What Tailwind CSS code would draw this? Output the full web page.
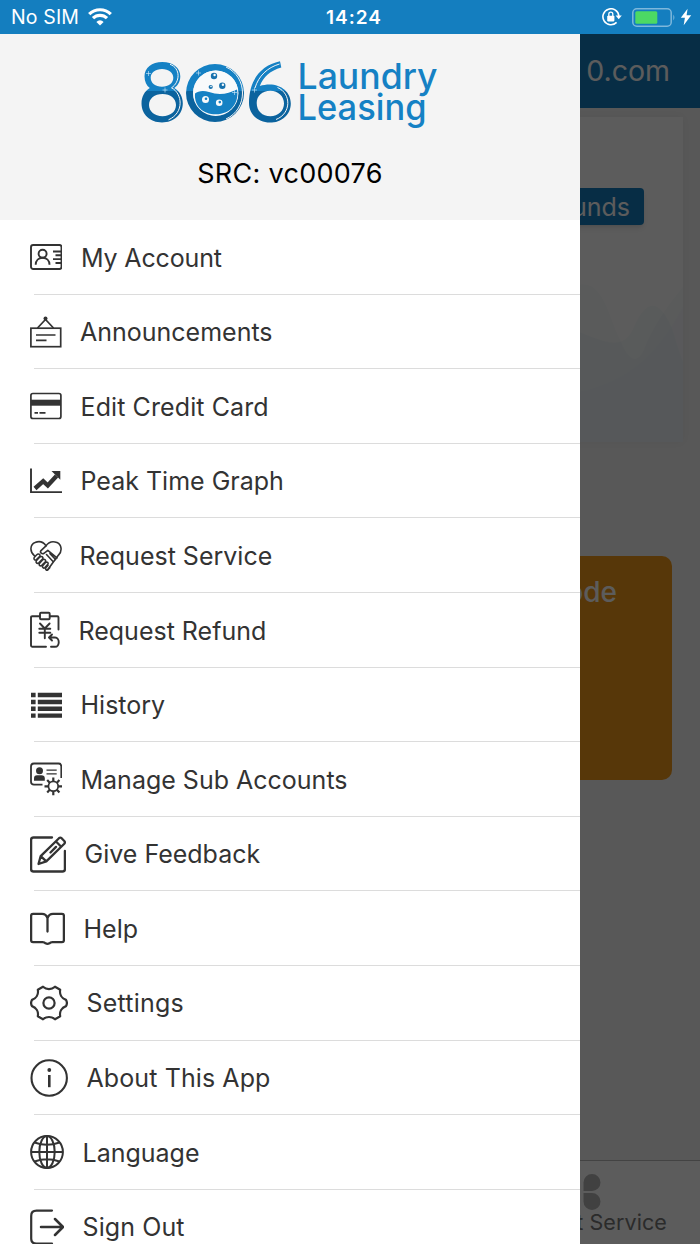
<!DOCTYPE html>
<html lang="en">
<head>
<meta charset="utf-8">
<title>806 Laundry Leasing</title>
<script src="https://cdn.jsdelivr.net/npm/@tailwindcss/browser@4"></script>
</head>
<body class="font-['Inter',sans-serif]">
<div class="relative flex h-[1244px] w-[700px] flex-col overflow-hidden bg-[#f4f4f4]">

  <!-- Status bar -->
  <div class="relative z-20 grid h-[34px] shrink-0 grid-cols-3 items-center bg-[#147ebf] pr-2 pl-[11px] text-white">
    <div class="flex items-center gap-[9px]">
      <span class="pt-px text-[19.5px] leading-none tracking-[0.15px]">No SIM</span>
      <svg class="h-[18px] w-6" viewBox="0 0 24 18" fill="none" stroke="#fff" stroke-width="3.2"><path d="M1.2 6.2a15.3 15.3 0 0 1 21.6 0"/><path d="M5 10.2a9.9 9.9 0 0 1 14 0"/><path d="M12 17.6l-3.6-3.7a5 5 0 0 1 7.200 0z" fill="#fff" stroke="none"/></svg>
    </div>
    <div class="pt-px pl-[5px] text-center text-[19px] leading-none font-semibold tracking-[1px]">14:24</div>
    <div class="flex items-center justify-end gap-2.5">
      <svg class="h-[18px] w-5" viewBox="0 0 20 18" fill="none" stroke="#fff" stroke-width="1.6"><path d="M16.9 8.2A8 8 0 1 0 14.6 14.4"/><path d="M13.600 7.400h6.200l-3.100 3.800z" fill="#fff" stroke="none"/><rect x="5.200" y="7.800" width="7.200" height="5.600" rx=".8" fill="#fff" stroke="none"/><path d="M6.800 8V6.200a2 2 0 0 1 4 0V8" stroke-width="1.300"/></svg>
      <svg class="h-[19px] w-[44px]" viewBox="0 0 44 19"><rect x=".8" y=".8" width="38.400" height="17.400" rx="4" fill="none" stroke="#fff" stroke-opacity=".45" stroke-width="1.500"/><rect x="3.300" y="3.300" width="22" height="12.400" rx="1.500" fill="#4cd964"/><path d="M41.300 6.500q2.200 3 0 6z" fill="#fff" fill-opacity=".45"/></svg>
      <svg class="-ml-1.5 h-[18px] w-3" viewBox="0 0 12 18" fill="#fff"><path d="M7.600.8L.8 9.800h4.100L3.700 17.200 11.200 7.300H6.600z"/></svg>
    </div>
  </div>

  <!-- Page behind the drawer -->
  <div class="flex h-[74px] shrink-0 items-center justify-end bg-[#147ebf] pr-[30px] text-[28.5px] text-white">0.com</div>
  <div class="relative mt-[9px] mr-[17px] ml-4 flex h-[325px] shrink-0 justify-end overflow-hidden bg-white pt-[71px] pr-[39px] shadow-[0_0_10px_rgba(0,0,0,.06)]">
    <svg class="absolute right-0 bottom-0 h-[200px] w-[104px]" viewBox="0 0 104 200"><path d="M0 43C25 38 30 78 42 100C50 120 60 125 68 100C80 75 92 60 104 45V200H0z" fill="#cfe6ec" fill-opacity=".14"/><path d="M0 90C25 100 45 110 55 85C68 55 80 60 90 80C95 90 98 105 104 120V200H0z" fill="#bfe0ea" fill-opacity=".12"/><path d="M0 150C50 140 80 110 104 65V200H0z" fill="#e0e2fa" fill-opacity=".14"/></svg>
    <div class="relative flex h-[37px] items-center rounded bg-[#147ebf] px-[14px] pt-0.5 text-[25px] text-white shadow-md">Add Funds</div>
  </div>
  <div class="mt-[114px] mr-7 ml-7 flex h-[224px] shrink-0 justify-end rounded-[10px] bg-[#f2991a] pt-[15px] pr-[55px] text-[28px] font-medium text-white">Scan Code</div>
  <div class="mt-auto flex h-[84px] shrink-0 flex-col items-end border-t border-[#bbb] bg-white pt-[13px] pr-[33px] text-[#777]">
    <svg class="mr-[66px] h-9 w-9" viewBox="0 0 36 36" fill="#b5b5b5"><path d="M18.500 17V8.500A8.500 8.500 0 1 1 27 17zM18.500 19H27a8.500 8.500 0 1 1-8.500 8.500zM14.500 17V8.500A8.500 8.500 0 1 0 6 17zM14.500 19H6a8.500 8.500 0 1 0 8.500 8.500z"/></svg>
    <span class="text-[21.500px] leading-[24px] tracking-[0.1px]">Request Service</span>
  </div>
  <div class="absolute inset-0 z-10 bg-black/64"></div>

  <!-- Drawer -->
  <aside class="absolute top-[34px] left-0 z-10 flex h-[1210px] w-[580px] flex-col overflow-hidden bg-white">
    <header class="flex h-[186px] shrink-0 flex-col items-center bg-[#f4f4f4] pt-[24px]">
      <svg class="h-[72px] w-[300px] overflow-visible" viewBox="140 58 300 72">
        <defs>
          <linearGradient id="tone" gradientUnits="userSpaceOnUse" x1="0" y1="62" x2="0" y2="123"><stop offset=".47" stop-color="#1581c4"/><stop offset=".47" stop-color="#0b639e"/></linearGradient>
        </defs>
        <g fill="url(#tone)" fill-rule="evenodd">
          <path d="M162.300 62c10.500 0 18 6 18 14.200 0 5.500-2.600 9.300-6 11.800 5 3 8.500 8.300 8.500 15.300 0 11.200-9 19.200-20.800 19.200s-20.500-8-20.500-19.200c0-7 3.300-12.300 8.300-15.300-3.300-2.500-5.300-6.300-5.300-11.800 0-8.200 7.300-14.200 17.800-14.200zM162 69c-6.600 0-11.300 3.500-11.300 8.700s4.700 9 11.300 9 11.300-3.800 11.300-9-4.700-8.700-11.300-8.700zM162.500 94c-8 0-13.500 4.600-13.500 11s5.500 11.200 13.500 11.200 13.500-4.700 13.500-11.200-5.500-11-13.500-11z"/>
          <path d="M215 64a29 29 0 1 1 0 58 29 29 0 0 1 0-58zM215.700 70.500a22.700 22.700 0 1 0 0 45.400 22.700 22.700 0 0 0 0-45.400z"/>
          <path d="M280 61.300l1.300 6.200c-11 3-18 9.500-21.500 18.600 3-1 6.500-1.500 9.700-1.500 12 0 21.300 8 21.300 18.800 0 11.200-9.300 19.200-21 19.200S249 114.500 249 103c0-22 11-37.500 31-41.700zM270.300 90.700c-8 0-13.600 5-13.600 12.300 0 8 5.600 13.200 13.600 13.200s13.700-5.500 13.700-12.700-5.700-12.800-13.700-12.800z"/>
        </g>
        <path d="M170 64.300c11 4 10 18 1.500 23.500 11 5.500 13 25-3 32M226 67c22 10 22 42 0 52M277.500 87.500c14 6 14 26-1.500 32M279.500 64c-12 3.500-21 12-24.500 24" fill="none" stroke="#f4f4f4" stroke-width="1"/>
        <circle cx="215.700" cy="93" r="22.500" fill="#f8fafb"/>
        <path d="M195 93.500c3-2.500 8-3.500 14-1.500 10 3.500 19 2 28-2.500 2.500 13-6 24.800-21.200 24.800C203 114.300 194 106 195 93.500z" fill="#1581c4"/>
        <g fill="#1772ae"><circle cx="214" cy="76" r="3.200"/><circle cx="222.300" cy="85.700" r="3.200"/><circle cx="210.700" cy="87" r="2.100"/></g>
        <g fill="#f8fafb"><circle cx="205.500" cy="99.500" r="3.500"/><circle cx="219.200" cy="102.800" r="3.300"/><circle cx="214.600" cy="75" r="1.200"/><circle cx="222.900" cy="84.800" r="1.200"/><circle cx="211" cy="86.500" r=".8"/></g>
        <circle cx="206" cy="98.800" r="1.300" fill="#1581c4"/><circle cx="219.800" cy="102.100" r="1.300" fill="#1581c4"/>
        <g stroke="#d9edfa" stroke-width=".6"><path d="M148.500 71v5M146 73.500h5M165 87.500v5M162.500 90h5M198.500 70.500v5M196 73h5M234.500 90v5M232 92.500h5M254.500 87.500v5M252 90h5"/></g>
        <g fill="#1581c4" font-family="Inter, sans-serif" font-size="35.500" font-weight="500"><text x="297.500" y="88.700" textLength="140" lengthAdjust="spacingAndGlyphs">Laundry</text><text x="297.500" y="119.700" textLength="129" lengthAdjust="spacingAndGlyphs">Leasing</text></g>
      </svg>
      <div class="mt-[26px] text-[27px] leading-[36px] tracking-[0.3px] text-black">SRC: vc00076</div>
    </header>

    <nav class="flex flex-col text-[25px] text-[#333]">
      <a class="relative flex h-[74.600px] shrink-0 items-center pl-[30px] after:absolute after:right-0 after:bottom-0 after:left-[34px] after:h-px after:bg-[#dcdcdc]"><svg class="mr-[19px] h-10 w-8" viewBox="0 0 32 40" fill="none" stroke="#333" stroke-width="1.900"><rect x="1" y="8" width="30.500" height="24" rx="2.200"/><circle cx="12.600" cy="16.700" r="4"/><path d="M5.700 27.800c0-4.500 3-7 6.900-7s6.900 2.500 6.900 7M23 14.500h8M25.500 18.300h6M23 22.100h8M25.500 26h6"/></svg><span class="pt-0.5 tracking-[-0.15px]">My Account</span></a>
      <a class="relative flex h-[74.600px] shrink-0 items-center pl-[30px] after:absolute after:right-0 after:bottom-0 after:left-[34px] after:h-px after:bg-[#dcdcdc]"><svg class="mr-[18px] h-10 w-8" viewBox="0 0 32 40" fill="none" stroke="#333" stroke-width="1.700"><rect x=".9" y="16.200" width="29.800" height="18.500"/><path d="M7.500 16l8-8.500 8 8.500M6 23h19.500M6 28.300h10.500"/><circle cx="15.500" cy="6.500" r="2" fill="#333" stroke="none"/></svg><span class="pt-0.5">Announcements</span></a>
      <a class="relative flex h-[74.600px] shrink-0 items-center pl-[30px] after:absolute after:right-0 after:bottom-0 after:left-[34px] after:h-px after:bg-[#dcdcdc]"><svg class="mr-[18.500px] h-10 w-8" viewBox="0 0 32 40" fill="none" stroke="#333" stroke-width="1.700"><rect x=".9" y="7.500" width="30" height="25" rx="2"/><path d="M1 16.700h30" stroke-width="6"/><path d="M4.500 26.800H8M9.500 26.800h6"/></svg><span class="pt-0.5 tracking-[0.1px]">Edit Credit Card</span></a>
      <a class="relative flex h-[74.600px] shrink-0 items-center pl-[30px] after:absolute after:right-0 after:bottom-0 after:left-[34px] after:h-px after:bg-[#dcdcdc]"><svg class="mr-[18.500px] h-10 w-8" viewBox="0 0 32 40" fill="none" stroke="#333" stroke-width="1.900"><path d="M1 7.500v23.600h31.300"/><path d="M5 27.500l8.200-7.300 4.600 4.300 8.700-9.500" stroke-width="4.400"/><path d="M21.500 10h8.800v8.800z" fill="#333" stroke="none"/></svg><span class="pt-0.5">Peak Time Graph</span></a>
      <a class="relative flex h-[74.600px] shrink-0 items-center pl-[30px] after:absolute after:right-0 after:bottom-0 after:left-[34px] after:h-px after:bg-[#dcdcdc]"><svg class="mr-[17.500px] h-10 w-8" viewBox="0 0 32 40" fill="none" stroke="#333" stroke-width="1.600" stroke-linejoin="round" stroke-linecap="round"><path d="M4.500 19.800C-.8 15.500.2 8.500 5 6.600c4-1.700 8.300-.6 11 3.200 2.800-3.800 7-4.900 11-3.200 4.800 2.200 5.400 8.500 1.500 12.500L17.500 34"/><path d="M16 9.800l-5 4.800c-1.500 2 1 4.200 3.300 2.500l3.500-2.700 9.200 7.500M16.500 18.500l6.500 7M20 17.700l5.500 5.700"/><path d="M6.500 19l-2.300 2.500c-.9 2 .9 3.200 2.300 2l3.300-3.300c.9-2-1.500-3-3.300-1.200zM9.800 21l-3.500 3.800c-.9 2 .9 3.200 2.500 2l4-4c.7-2-1.200-3-3-1.800zM12.700 23.700l-3.300 3.800c-.9 1.800.9 3 2.400 1.900l3.600-3.700c.9-1.800-1-3-2.700-2zM15.500 26.500l-2.800 3.200c-.9 1.800.9 3 2.200 1.900l3-3.200c.9-1.700-.9-2.900-2.400-1.900zM18 29.500l-2.200 2.300c-.7 1.800.9 2.800 2 2l2-2"/></svg><span class="pt-0.5">Request Service</span></a>
      <a class="relative flex h-[74.600px] shrink-0 items-center pl-[30px] after:absolute after:right-0 after:bottom-0 after:left-[34px] after:h-px after:bg-[#dcdcdc]"><svg class="mr-[16.500px] h-10 w-8" viewBox="0 0 32 40" fill="none" stroke="#333" stroke-width="1.900" stroke-linecap="round" stroke-linejoin="round"><path d="M9.500 6.200H2.200Q1 6.200 1 7.400v28.200Q1 36.800 2.200 36.800H16M20 6.200h7.300q1.200 0 1.200 1.200V19.500"/><rect x="10" y="2.700" width="9.700" height="6.500" rx="1"/><path d="M10 13.500l4.800 5 4.800-5M14.800 18.500v9.700M9.300 18.700h11M9.300 22.800h11M22 24.500l-3 3 3 3M19.500 27.500h5.500c5 0 5 9.300 0 9.300h-4"/></svg><span class="pt-0.5">Request Refund</span></a>
      <a class="relative flex h-[74.600px] shrink-0 items-center pl-[30px] after:absolute after:right-0 after:bottom-0 after:left-[34px] after:h-px after:bg-[#dcdcdc]"><svg class="mr-[18.500px] h-10 w-8" viewBox="0 0 32 40" fill="none" stroke="#333" stroke-width="4.400"><path d="M1 10h4.600M7.800 10H32M1 17h4.600M7.800 17H32M1 23.800h4.600M7.800 23.800H32M1 30.600h4.600M7.800 30.600H32"/></svg><span class="pt-0.5">History</span></a>
      <a class="relative flex h-[74.600px] shrink-0 items-center pl-[30px] after:absolute after:right-0 after:bottom-0 after:left-[34px] after:h-px after:bg-[#dcdcdc]"><svg class="mr-[18.500px] h-10 w-8" viewBox="0 0 32 40" fill="none" stroke="#333" stroke-width="1.800"><path d="M12.500 25.700H4Q1 25.700 1 22.700V7.500Q1 4.500 4 4.500h24.500q2.800 0 2.800 3V19"/><circle cx="9.500" cy="11.800" r="3.500" fill="#333" stroke="none"/><path d="M4 21.800v-2.300q0-3.300 3-3.300h4.500q3.300 0 3.300 3.300v2.300z" fill="#333" stroke="none"/><path d="M16.500 11.200h10.200M16.500 14.900h10.200" stroke-width="1.300"/><circle cx="23.300" cy="27.300" r="4.900"/><path d="M23.300 22.300v-3.800M23.300 36.200v-3.900M28.300 27.300h3.800M14.500 27.300h3.800M26.900 23.700l2.500-2.600M17.200 33.400l2.500-2.600M26.900 30.800l2.500 2.600M17.200 21.100l2.500 2.600" stroke-width="2.200"/></svg><span class="pt-0.5">Manage Sub Accounts</span></a>
      <a class="relative flex h-[74.600px] shrink-0 items-center pl-[30px] after:absolute after:right-0 after:bottom-0 after:left-[34px] after:h-px after:bg-[#dcdcdc]"><svg class="mr-[18.500px] h-10 w-9" viewBox="0 0 36 40" fill="none" stroke="#333" stroke-width="2.300" stroke-linejoin="round" stroke-linecap="round"><path d="M22 3.500H3.500Q1.100 3.500 1.100 5.900v29.200q0 2.400 2.400 2.400h29q2.400 0 2.400-2.400V17"/><path d="M29 4.200q1.300-1.200 2.600 0L34.300 7q1.200 1.300 0 2.700L16.300 27.400 8.500 30l2.200-7.900zM26 7.500l5.200 5.200M10.700 22.100l5.600 5.300M20.500 18.500l5.500-5.600"/></svg><span class="pt-0.5">Give Feedback</span></a>
      <a class="relative flex h-[74.600px] shrink-0 items-center pl-[30px] after:absolute after:right-0 after:bottom-0 after:left-[34px] after:h-px after:bg-[#dcdcdc]"><svg class="mr-[18.500px] h-10 w-[35px]" viewBox="0 0 35 40" fill="none" stroke="#333" stroke-width="2.300" stroke-linejoin="round" stroke-linecap="round"><path d="M17.500 22.500V9q-1.500-4.200-5.500-4.200H3q-1.900 0-1.900 1.900v24.500q0 1.900 1.900 1.900h9.500q2.200 0 3 1.200 2 1 4 0 .8-1.200 3-1.200H32q1.900 0 1.900-1.900V6.700q0-1.900-1.900-1.900h-9q-4 0-5.500 4.200"/></svg><span class="pt-0.5">Help</span></a>
      <a class="relative flex h-[74.600px] shrink-0 items-center pl-[30px] after:absolute after:right-0 after:bottom-0 after:left-[34px] after:h-px after:bg-[#dcdcdc]"><svg class="mr-[18.500px] h-10 w-[38px]" viewBox="0 0 38 40" fill="none" stroke="#333" stroke-width="2.200" stroke-linejoin="round"><path d="M13 3.700C16.500 6.800 21.500 6.800 25 3.700L30.200 6.700C29.300 11.300 31.700 15.300 36 16.900Q37.800 20 36 23.100C31.700 24.700 29.300 28.700 30.200 33.300L25 36.300C21.500 33.200 16.500 33.200 13 36.300L7.800 33.300C8.700 28.700 6.300 24.700 2 23.100Q.2 20 2 16.900C6.300 15.300 8.700 11.300 7.800 6.700z"/><circle cx="19" cy="20" r="5.600"/></svg><span class="pt-0.5 tracking-[0.2px]">Settings</span></a>
      <a class="relative flex h-[74.600px] shrink-0 items-center pl-[30px] after:absolute after:right-0 after:bottom-0 after:left-[34px] after:h-px after:bg-[#dcdcdc]"><svg class="mr-[18.500px] h-10 w-[38px]" viewBox="0 0 38 40" fill="none" stroke="#333" stroke-width="2.100"><circle cx="19.200" cy="20" r="17.700"/><path d="M19.300 17v12.200" stroke-width="2.600"/><circle cx="19.300" cy="12" r="1.900" fill="#333" stroke="none"/></svg><span class="pt-0.5 tracking-[0.1px]">About This App</span></a>
      <a class="relative flex h-[74.600px] shrink-0 items-center pl-[30px] after:absolute after:right-0 after:bottom-0 after:left-[34px] after:h-px after:bg-[#dcdcdc]"><svg class="mr-[18.500px] h-10 w-[34px]" viewBox="0 0 34 40" fill="none" stroke="#333" stroke-width="2"><circle cx="17" cy="20" r="15.900"/><ellipse cx="17" cy="20" rx="7.700" ry="15.900"/><path d="M1 20h32M4.500 10.500q12.500 4.500 25 0M4.500 29.500q12.500-4.500 25 0M17 4v32"/></svg><span class="pt-0.5">Language</span></a>
      <a class="flex h-[74.600px] shrink-0 items-center pl-[30px]"><svg class="mr-[18.500px] h-10 w-[34px]" viewBox="0 0 34 40" fill="none" stroke="#333" stroke-width="2.200" stroke-linecap="round" stroke-linejoin="round"><path d="M22 3.600H6.500Q1.200 3.600 1.200 8.900V31.500q0 5.200 5.300 5.200H22"/><path d="M11 20h21.500M25 12l8 8-8 8" stroke-width="2.500"/></svg><span class="pt-0.5 tracking-[0.1px]">Sign Out</span></a>
    </nav>
  </aside>
</div>
</body>
</html>
